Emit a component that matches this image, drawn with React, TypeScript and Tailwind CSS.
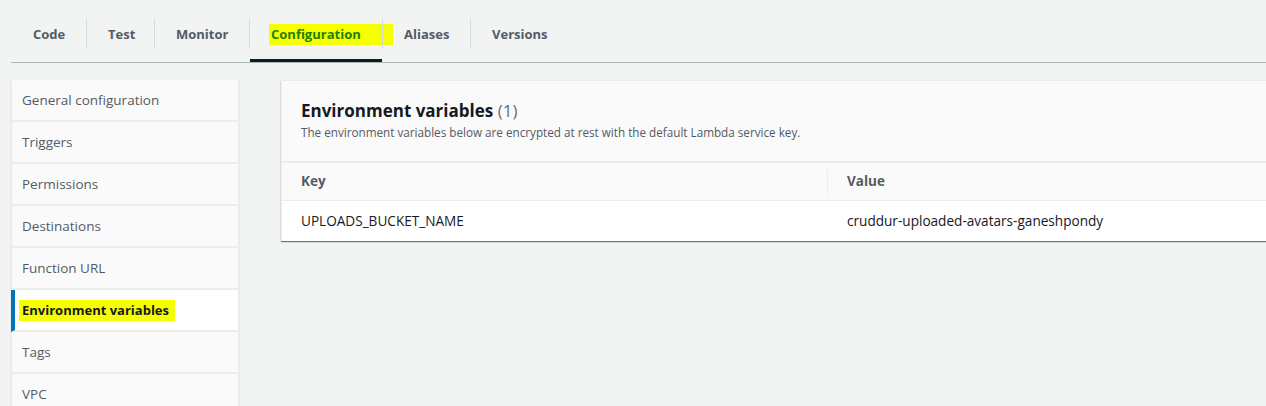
import React from 'react';

// box widths measured between the separators
const tabs: { label: string; width: string }[] = [
  { label: 'Code', width: 'w-[75px] pl-[22px]' },
  { label: 'Test', width: 'w-[67px] pl-[21px]' },
  { label: 'Monitor', width: 'w-[94px] pl-[21px]' },
  { label: 'Configuration', width: 'w-[132px] pl-[21px]' },
  { label: 'Aliases', width: 'w-[87px] pl-[21px]' },
  { label: 'Versions', width: 'w-[98px] pl-[21px]' },
];

const navItems = [
  'General configuration',
  'Triggers',
  'Permissions',
  'Destinations',
  'Function URL',
  'Environment variables',
  'Tags',
  'VPC',
];

const Tabs: React.FC = () => (
  <div className="ml-[11px] flex h-[63px] items-start border-b border-[#aab7b8]">
    {tabs.map((tab, i) => {
      const active = tab.label === 'Configuration';
      return (
        <div key={tab.label} className="flex items-start">
          {i > 0 && <div className="relative z-10 mt-[19px] h-[29px] w-px bg-[#d5dbdb]" />}
          <div
            className={`flex h-[62px] flex-col items-start pt-[24px] ${tab.width} ${
              active ? 'border-b-[3px] border-[#16191f]' : ''
            }`}
          >
            {active ? (
              <span className="-ml-[2px] -mr-[32px] whitespace-nowrap bg-[#f5ff00] pl-[2px] pr-[32px] text-[13px] font-bold leading-[21px] text-[#1d8102]">
                {tab.label}
              </span>
            ) : (
              <span className="whitespace-nowrap text-[13px] font-bold leading-[21px] text-[#545b64]">
                {tab.label}
              </span>
            )}
          </div>
        </div>
      );
    })}
  </div>
);

const SideNav: React.FC = () => (
  <div className="w-[228px] shrink-0 border-x border-[#eaeded] bg-[#fafafa] shadow-[0_1px_1px_rgba(0,28,36,0.2)]">
    {navItems.map((item) => {
      const active = item === 'Environment variables';
      return (
        <div
          key={item}
          className={`flex h-[42px] items-center border-b-2 border-[#eaeded] ${
            active ? '-ml-px border-l-[4px] border-l-[#0073bb] bg-white pl-[4px]' : 'pl-[10px]'
          }`}
        >
          {active ? (
            <span className="bg-[#f5ff00] pl-[3px] pr-[6px] text-[13px] font-bold leading-[21px] text-[#16191f]">
              {item}
            </span>
          ) : (
            <span className="text-[13.5px] text-[#545b64]">{item}</span>
          )}
        </div>
      );
    })}
  </div>
);

const EnvPanel: React.FC = () => (
  <div className="flex-1 border-l border-t border-[#eaeded] bg-[#fafafa] shadow-[0_1px_1px_0_rgba(0,28,36,0.5),1px_1px_1px_0_rgba(0,28,36,0.15)]">
    <div className="border-b-2 border-[#eaeded] px-[19px] pb-[21px] pt-[18px]">
      <h2 className="text-[17px] font-bold leading-[24px] text-[#16191f]">
        Environment variables <span className="font-normal text-[#687078]">(1)</span>
      </h2>
      <p className="mt-[1px] text-[11.7px] leading-[16px] text-[#545b64]">
        The environment variables below are encrypted at rest with the default Lambda service key.
      </p>
    </div>
    <div className="grid grid-cols-[546px_1fr]">
      <div className="flex h-[38px] items-center border-b border-[#eaeded] pl-[19px] text-[13.5px] font-bold text-[#545b64]">
        <span className="flex-1">Key</span>
        <span className="h-[24px] w-px bg-[#eaeded]" />
      </div>
      <div className="flex h-[38px] items-center border-b border-[#eaeded] pl-[19px] text-[13.5px] font-bold text-[#545b64]">
        Value
      </div>
      <div className="flex h-[40px] items-center bg-white pl-[19px] text-[13.6px] text-[#16191f]">
        UPLOADS_BUCKET_NAME
      </div>
      <div className="flex h-[40px] items-center bg-white pl-[19px] text-[13.6px] text-[#16191f]">
        cruddur-uploaded-avatars-ganeshpondy
      </div>
    </div>
  </div>
);

export default function App() {
  return (
    <div
      className="h-[406px] w-[1266px] overflow-hidden bg-[#f2f3f3]"
      style={{ fontFamily: '"Open Sans", Arial, sans-serif' }}
    >
      <Tabs />
      <div className="mt-[17px] flex gap-[42px] pl-[11px]">
        <SideNav />
        <div className="flex flex-1 items-start">
          <EnvPanel />
        </div>
      </div>
    </div>
  );
}
